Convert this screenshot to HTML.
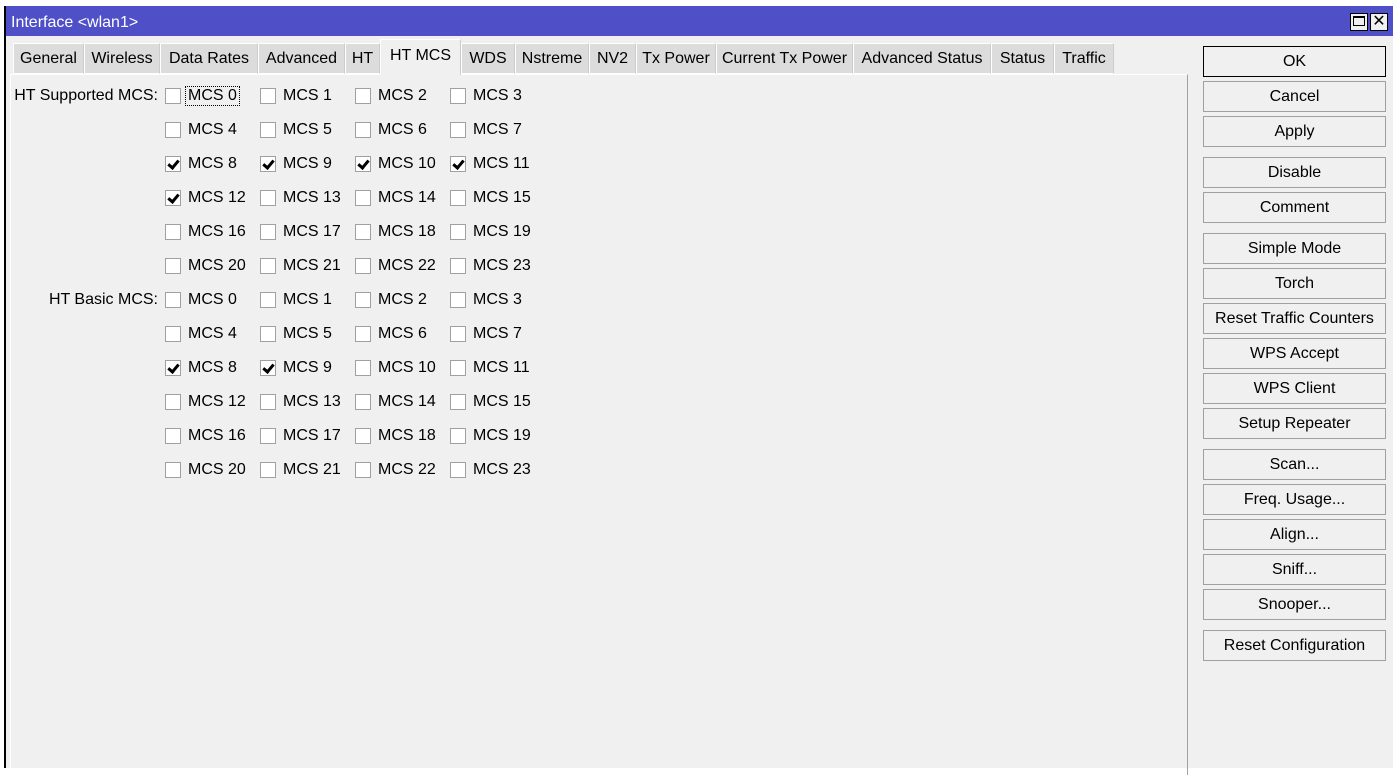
<!DOCTYPE html>
<html><head><style>
body{margin:0;width:1393px;height:768px;background:#fff;position:relative;overflow:hidden;font-family:"Liberation Sans",sans-serif;font-size:16px;color:#000}
.win{position:absolute;left:4px;top:6px;width:1387px;height:762px;background:#f0f0f0;border-left:2px solid #000}
.title{position:absolute;left:0;top:0;width:1387px;height:30px;background:#4f50c8;color:#fff;font-size:16px;line-height:33px;padding-left:5px;box-sizing:border-box}
.wb{position:absolute;top:7px;width:18px;height:18px;background:#f0f0f0;border:1px solid #000;box-sizing:border-box}
.tab{position:absolute;top:37px;height:31px;background:#dcdcdc;border:1px solid #fff;border-right:1px solid #ccc;box-sizing:border-box;line-height:30px;text-align:center}
.tab.a{top:33px;height:36px;background:#f0f0f0;border-bottom:none;line-height:32px;z-index:2}
.panel{position:absolute;left:4px;top:68px;width:1176px;height:700px;border-top:1px solid #fff;border-left:1px solid #fff;border-right:1px solid #a0a0a0}
.cb{position:absolute;width:16px;height:16px;background:#fff;border:1px solid #a0a0a0;box-sizing:border-box}
.cb.c::after{content:"";position:absolute;left:4px;top:1px;width:4px;height:8px;border:solid #000;border-width:0 3px 3px 0;transform:rotate(40deg)}
.lb{position:absolute;line-height:18px}
.btn{position:absolute;left:1203px;width:183px;height:31px;border:1px solid #a0a0a0;box-sizing:border-box;text-align:center;line-height:29px;background:#f0f0f0}
.sl{position:absolute;right:1235px;line-height:18px}
</style></head><body>
<div class="win">
<div class="title">Interface &lt;wlan1&gt;
<div class="wb" style="left:1344px"><div style="position:absolute;left:2px;top:2px;width:12px;height:10px;border:1px solid #000;border-top-width:2px;box-sizing:border-box"></div></div>
<div class="wb" style="left:1364px;text-align:center;line-height:16px;color:#000;font-size:16px">✕</div>
</div>
<div class="tab" style="left:7px;width:71px">General</div>
<div class="tab" style="left:78px;width:76px">Wireless</div>
<div class="tab" style="left:154px;width:98px">Data Rates</div>
<div class="tab" style="left:252px;width:87px">Advanced</div>
<div class="tab" style="left:339px;width:35px">HT</div>
<div class="tab a" style="left:374px;width:81px">HT MCS</div>
<div class="tab" style="left:455px;width:54px">WDS</div>
<div class="tab" style="left:509px;width:74px">Nstreme</div>
<div class="tab" style="left:583px;width:47px">NV2</div>
<div class="tab" style="left:630px;width:80px">Tx Power</div>
<div class="tab" style="left:710px;width:137px">Current Tx Power</div>
<div class="tab" style="left:847px;width:138px">Advanced Status</div>
<div class="tab" style="left:985px;width:63px">Status</div>
<div class="tab" style="left:1048px;width:60px">Traffic</div>
<div class="panel"></div>
</div>
<div id="g"></div>
<script>
var h='';
var chk={8:1,9:1,10:1,11:1,12:1,108:1,109:1};
var cols=[165,260,355,450];
for(var s=0;s<2;s++){for(var r=0;r<6;r++){for(var c=0;c<4;c++){var n=r*4+c;var y=88+(s*6+r)*34;var k=s*100+n;
h+='<div class="cb'+(chk[k]?' c':'')+'" style="left:'+cols[c]+'px;top:'+y+'px"></div>';
h+='<div class="lb" style="left:'+(cols[c]+23)+'px;top:'+(y-1)+'px;'+(k==0?'outline:1px dotted #000;padding:0 2px;left:186px':'')+'">MCS '+n+'</div>';}}}
h+='<div class="sl" style="top:87px">HT Supported MCS:</div><div class="sl" style="top:291px">HT Basic MCS:</div>';
var b=[["OK",46],["Cancel",81],["Apply",116],["Disable",157],["Comment",192],["Simple Mode",233],["Torch",268],["Reset Traffic Counters",303],["WPS Accept",338],["WPS Client",373],["Setup Repeater",408],["Scan...",449],["Freq. Usage...",484],["Align...",519],["Sniff...",554],["Snooper...",589],["Reset Configuration",630]];
b.forEach(function(x,i){h+='<div class="btn" style="top:'+x[1]+'px;'+(i==0?'border-color:#000':'')+'">'+x[0]+'</div>'});
document.getElementById('g').innerHTML=h;
</script>
</body></html>
